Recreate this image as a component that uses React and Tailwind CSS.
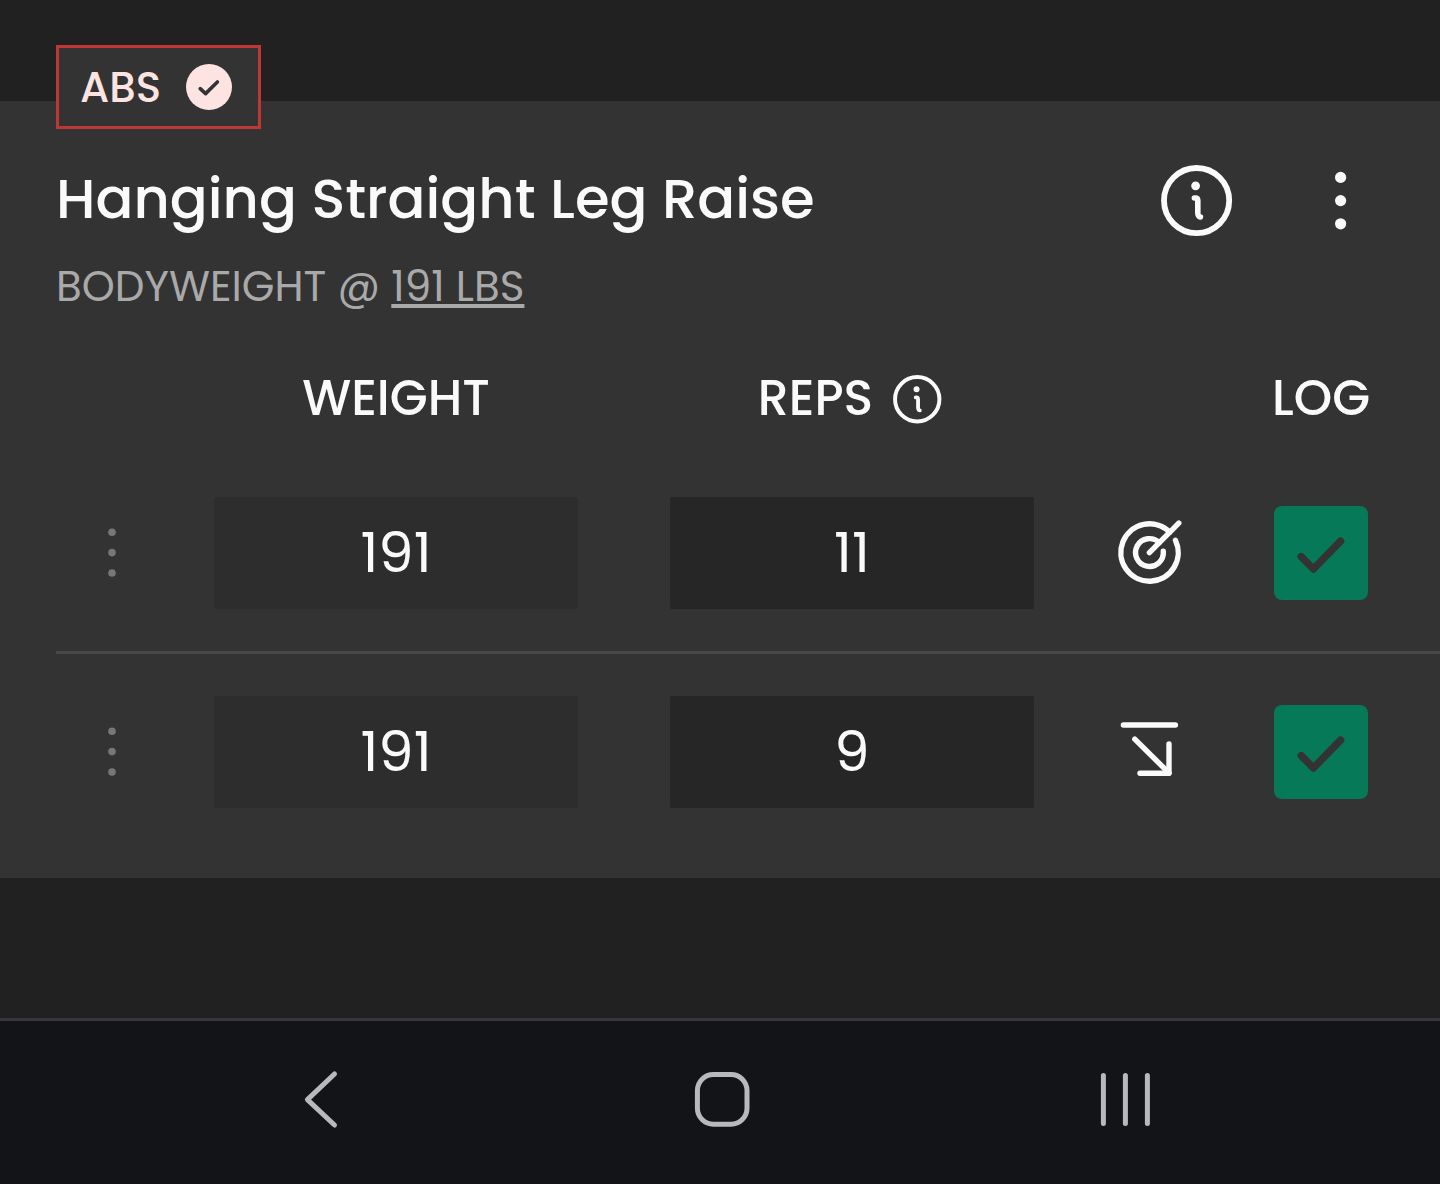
import { useState } from 'react';

const initialSets = [
  { id: 1, weight: 191, reps: 11, goal: 'target', logged: true },
  { id: 2, weight: 191, reps: 9, goal: 'below', logged: true },
];

function InfoIcon({ className }) {
  return (
    <svg viewBox="0 0 72 72" fill="none" stroke="currentColor" strokeLinecap="round" strokeLinejoin="round" className={className} aria-hidden="true">
      <circle cx="35.6" cy="35.6" r="32.6" strokeWidth="5.8" />
      <circle cx="34.6" cy="20.8" r="4.4" fill="currentColor" stroke="none" />
      <path d="M33.4 33h0.8c1.6 0 2.6 1 2.6 2.6v12.2c0 2.4 0.6 3.8 2.6 4.2" strokeWidth="5.6" />
    </svg>
  );
}

function DotsIcon({ className }) {
  return (
    <svg viewBox="0 0 72 72" fill="currentColor" className={className} aria-hidden="true">
      <circle cx="35.6" cy="12.4" r="5.6" />
      <circle cx="35.6" cy="35.6" r="5.6" />
      <circle cx="35.6" cy="58.8" r="5.6" />
    </svg>
  );
}

function GoalIcon({ goal }) {
  return (
    <svg viewBox="0 0 72 72" fill="none" stroke="currentColor" strokeWidth="5.4" strokeLinecap="round" strokeLinejoin="round" className="mx-auto h-[72px] w-[72px]" role="img" aria-label={goal}>
      {goal === 'target' ? (
        <>
          <path d="M55.8 15.2A28.7 28.7 0 1 0 61.5 23.3" />
          <path d="M45.3 25.7A13.9 13.9 0 1 0 49.3 34.3" />
          <path d="M35.4 35.6L64.8 6.2" />
        </>
      ) : (
        <>
          <path d="M9.4 9h52" />
          <path d="M20.8 23.2L55 57" />
          <path d="M55 28v29.2H26" />
        </>
      )}
    </svg>
  );
}

function SetRow({ set, onChange }) {
  return (
    <tr className="border-b-[3px] border-[#484848] last:border-b-0">
      <td>
        <button type="button" aria-label="Set options" className="mx-auto block text-[#777777]">
          <svg viewBox="0 0 56 56" fill="currentColor" className="h-14 w-14" aria-hidden="true">
            <circle cx="28" cy="7.2" r="3.8" />
            <circle cx="28" cy="27.6" r="3.8" />
            <circle cx="28" cy="48" r="3.8" />
          </svg>
        </button>
      </td>
      <td className="px-[46px] py-[42px]">
        <input
          type="text"
          aria-label="Weight"
          readOnly
          value={set.weight}
          className="block h-28 w-full rounded-xs bg-[#2d2d2d] pb-0.5 text-center text-[56px] text-[#fafafa] outline-none"
        />
      </td>
      <td className="px-[46px] py-[42px]">
        <input
          type="text"
          inputMode="numeric"
          aria-label="Reps"
          value={set.reps}
          onChange={(e) => onChange({ ...set, reps: e.target.value })}
          className="block h-28 w-full rounded-xs bg-[#262626] pb-0.5 text-center text-[56px] text-[#fafafa] outline-none"
        />
      </td>
      <td>
        <GoalIcon goal={set.goal} />
      </td>
      <td className="pr-[18px]">
        <div className="mx-auto grid h-[94px] w-[94px]">
          <input
            type="checkbox"
            aria-label="Log set"
            checked={set.logged}
            onChange={(e) => onChange({ ...set, logged: e.target.checked })}
            className="peer col-start-1 row-start-1 h-full w-full appearance-none rounded-lg bg-[#262626] checked:bg-[#067a58]"
          />
          <svg viewBox="0 0 94 94" fill="none" stroke="#333333" strokeWidth="7.4" strokeLinecap="round" strokeLinejoin="round" className="pointer-events-none invisible col-start-1 row-start-1 peer-checked:visible" aria-hidden="true">
            <path d="M27.2 50.6L39.4 63L66.6 35.2" />
          </svg>
        </div>
      </td>
    </tr>
  );
}

export default function App() {
  const [sets, setSets] = useState(initialSets);

  const updateSet = (next) => {
    setSets(sets.map((s) => (s.id === next.id ? next : s)));
  };

  return (
    <div className="flex min-h-screen flex-col bg-[#212121] font-[Poppins,Inter,sans-serif] text-[#fafafa]">
      <main className="flex-1 pt-[101px]">
        <section className="flex flex-col bg-[#333333] pb-7 pl-14">
          <div className="-mt-14 flex h-[84px] items-center gap-[25px] self-start border-[3px] border-[#bf3734] bg-[#333333] pr-[26px] pl-[21px] text-[#fde4e2]">
            <span className="text-[42px] font-medium">ABS</span>
            <svg viewBox="0 0 46 46" className="h-[46px] w-[46px]" aria-hidden="true">
              <circle cx="23" cy="23" r="23" fill="currentColor" />
              <path d="M14.2 24.6L19.6 29.6L31.4 18" fill="none" stroke="#333333" strokeWidth="3.6" strokeLinecap="round" strokeLinejoin="round" />
            </svg>
          </div>

          <div className="mt-8 flex h-20 items-center justify-between pr-[63px]">
            <h2 className="pb-1 text-[56px] font-medium">Hanging Straight Leg Raise</h2>
            <div className="flex gap-[72px]">
              <button type="button" aria-label="Exercise info">
                <InfoIcon className="h-[72px] w-[72px]" />
              </button>
              <button type="button" aria-label="Exercise options">
                <DotsIcon className="h-[72px] w-[72px]" />
              </button>
            </div>
          </div>

          <p className="mt-4 text-[42px] leading-[60px] text-[#a9a9a9]">
            BODYWEIGHT @ <a href="#bodyweight" className="underline decoration-4 underline-offset-[3px] [text-decoration-skip-ink:none]">191 LBS</a>
          </p>

          <table className="mt-[26px] w-full table-fixed border-collapse">
            <colgroup>
              <col className="w-28" />
              <col />
              <col />
              <col className="w-[140px]" />
              <col className="w-[220px]" />
            </colgroup>
            <thead>
              <tr className="h-28 text-[49px]">
                <td />
                <th className="font-medium">WEIGHT</th>
                <th className="pr-1 font-medium">
                  <div className="flex items-center justify-center gap-5">
                    REPS
                    <button type="button" aria-label="Reps info">
                      <InfoIcon className="h-[49px] w-[49px]" />
                    </button>
                  </div>
                </th>
                <td />
                <th className="pr-[18px] font-medium">LOG</th>
              </tr>
            </thead>
            <tbody>
              {sets.map((set) => (
                <SetRow key={set.id} set={set} onChange={updateSet} />
              ))}
            </tbody>
          </table>
        </section>
      </main>

      <nav className="grid h-[166px] grid-cols-3 place-items-center border-t-[3px] border-[#37383b] bg-[#131418] pr-[114px] pb-1.5 pl-[118px] text-[#b9b9bc]">
        <button type="button" aria-label="Back">
          <svg viewBox="0 0 64 64" fill="none" stroke="currentColor" strokeWidth="5" strokeLinecap="round" strokeLinejoin="round" className="h-16 w-16" aria-hidden="true">
            <path d="M47.5 6L20.4 31.6L47.5 57" />
          </svg>
        </button>
        <button type="button" aria-label="Home">
          <svg viewBox="0 0 64 64" fill="none" stroke="currentColor" strokeWidth="5" className="h-16 w-16" aria-hidden="true">
            <rect x="7.4" y="6.6" width="49.6" height="49.6" rx="16" />
          </svg>
        </button>
        <button type="button" aria-label="Recent apps">
          <svg viewBox="0 0 64 64" fill="none" stroke="currentColor" strokeWidth="5" strokeLinecap="round" className="h-16 w-16" aria-hidden="true">
            <path d="M10.4 7.4v48M32.4 7.4v48M54.4 7.4v48" />
          </svg>
        </button>
      </nav>
    </div>
  );
}
